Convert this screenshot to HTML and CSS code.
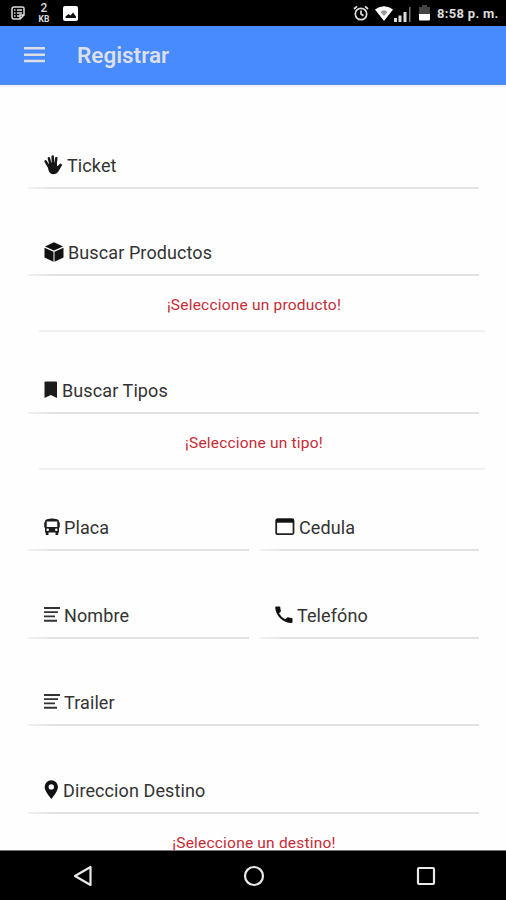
FILE: index.html
```html
<!DOCTYPE html>
<html lang="es">
<head>
<meta charset="utf-8">
<title>Registrar</title>
<link rel="stylesheet" href="styles.css">
</head>
<body>
<div class="statusbar">
  <svg class="st-list" width="14" height="14" viewBox="0 0 14 14" fill="none" stroke="#ddd" stroke-width="1.500"><path d="M3 1h8.500q1.500 0 1.500 1.500v6.500l-4 4H3q-2 0-2-2V3q0-2 2-2zM3 4h1.500M6 4h5M3 7h1.500M6 7h5M3 10h1.500M6 10h3M9 13V9h4"/></svg>
  <div class="speed"><span>2</span><small>KB</small></div>
  <svg width="15" height="15" viewBox="0 0 15 15"><rect width="15" height="15" rx="2" fill="#fff"/><path d="M2.500 12V10.500l3-2.500 2 1.500 2.500-3 3 4V12z" fill="#111"/></svg>
  <div class="status-right">
    <svg class="alarm" width="16" height="16" viewBox="0 0 16 16" fill="none" stroke="#ddd" stroke-width="1.700"><circle cx="8" cy="9" r="5.700"/><path d="M8 5.500V9l2.500 1.800M1 4l3-2.700M15 4l-3-2.700"/></svg>
    <svg class="wifi" width="18" height="15" viewBox="0 0 18 15"><path d="M0 3.500Q9-3 18 3.500L9 15z" fill="#fff"/><path d="M5.500 6q3.500-3.500 7 0L9 10z" fill="#999"/></svg>
    <svg class="signal" width="17" height="15" viewBox="0 0 17 15"><path d="M0 11h3v4H0zM4.500 8.500h3V15h-3zM9.500 5h3v10h-3z" fill="#ddd"/><path d="M15 0h1.500v15H15z" fill="#777"/></svg>
    <svg class="battery" width="11" height="16" viewBox="0 0 11 16"><path d="M3 0h5v2h3v7H0V2h3z" fill="#444"/><path d="M0 9h11v5.500q0 1-1 1H1q-1 0-1-1z" fill="#fff"/></svg>
    <span class="clock">8:58 p. m.</span>
  </div>
</div>
<header class="toolbar">
  <svg width="21" height="16" viewBox="0 0 21 16" fill="#dcdfe6"><path d="M0 0h21v2.500H0zM0 6.500h21V9H0zM0 12.800h21v2.500H0z"/></svg>
  <h1>Registrar</h1>
</header>
<main class="form">
  <div class="field"><svg width="19" height="20" viewBox="0 0 19 20" fill="none" stroke="#161616" stroke-width="2.500" stroke-linecap="round" stroke-linejoin="round"><path d="M5 12L1.600 6.300M6.700 10.500L4.900 3.300M9 10l-.3-8.500M11.300 10.500l1-7.300"/><path d="M4.800 10l1-1.500h6.200l.9 4.300 3.700-3.500.8.700-3.500 6q-1.500 2.500-5 2.500-3.200 0-4-4.500z" fill="#161616" stroke-width="1.400"/></svg><label>Ticket</label></div>
  <div class="field"><svg width="20" height="20" viewBox="0 0 20 20" fill="#111"><path d="M10 .3l9 4.200-9 4.100-9-4.100zM.5 5.700l9 4.100v9.900L.5 15.500zM19.500 5.700l-9 4.100v9.900l9-4.200z"/></svg><label>Buscar Productos</label></div>
  <p class="message">¡Seleccione un producto!</p>
  <div class="field short"><svg width="14" height="19" viewBox="0 0 14 19" fill="#1c1c1c"><path d="M.5 1.500q0-1 1-1h10.500q1 0 1 1v15.500l-6.200-3L.5 17z"/></svg><label>Buscar Tipos</label></div>
  <p class="message">¡Seleccione un tipo!</p>
  <div class="row short">
    <div class="field"><svg width="16" height="19" viewBox="0 0 16 19"><path fill="#1c1c1c" fill-rule="evenodd" d="M3 1.200Q8-.2 13 1.200q2 .5 2 2.300l.8 1.500v4l-.8 1v4.500h-.8V17h-2.700v-2.500h-7V17H1.800v-2.500H1V10L.2 9V5L1 3.500q0-1.800 2-2.300zM2.700 3.500V9h10.600V3.500zM3.700 10.500a1.300 1.300 0 100 2.600 1.300 1.300 0 000-2.600zm8.600 0a1.300 1.300 0 100 2.600 1.300 1.300 0 000-2.600z"/></svg><label>Placa</label></div>
    <div class="field right"><svg width="20" height="19" viewBox="0 0 20 19"><rect x="1.200" y="1.200" width="17.300" height="15" rx="1.500" fill="none" stroke="#222" stroke-width="1.800"/><path d="M1 1h18v3.700H1z" fill="#111"/></svg><label>Cedula</label></div>
  </div>
  <div class="row">
    <div class="field"><svg width="16" height="19" viewBox="0 0 16 19" fill="#333"><path d="M0 1h16v2H0zM0 5.300h14v1.800H0zM0 9.500h11v1.800H0zM0 13.700h13v2H0z"/></svg><label>Nombre</label></div>
    <div class="field right"><svg width="18" height="19" viewBox="0 0 18 19"><path fill="#111" d="M1 .5h3.500q.8 0 .8.800 0 2 .6 3.500.2.600-.2 1L4 7.300q2 4 6.300 6l1.800-1.800q.4-.4 1-.2 1.600.6 3.500.6.900 0 .9.900V16q0 1-.9 1C8 17 .5 9.500.2 1.500Q.2.500 1 .5z"/></svg><label>Telefóno</label></div>
  </div>
  <div class="field"><svg width="16" height="19" viewBox="0 0 16 19" fill="#333"><path d="M0 1h16v2H0zM0 5.300h14v1.800H0zM0 9.500h11v1.800H0zM0 13.700h13v2H0z"/></svg><label>Trailer</label></div>
  <div class="field"><svg width="15" height="20" viewBox="0 0 15 20"><path fill="#111" fill-rule="evenodd" d="M7.300.3A6.700 6.700 0 0114 7q0 4-6.700 12Q.6 11 .6 7A6.700 6.700 0 017.300.3zm0 3.900a2.700 2.700 0 100 5.400 2.700 2.700 0 000-5.400z"/></svg><label>Direccion Destino</label></div>
  <p class="message">¡Seleccione un destino!</p>
</main>
<nav class="navbar">
  <svg width="20" height="22" viewBox="0 0 20 22" fill="none" stroke="#e8e8e8" stroke-width="2.200" stroke-linejoin="round"><path d="M17.500 2v18L2 11z"/></svg>
  <svg width="22" height="22" viewBox="0 0 22 22" fill="none" stroke="#e8e8e8" stroke-width="2.200"><circle cx="11" cy="11" r="9"/></svg>
  <svg width="20" height="20" viewBox="0 0 20 20" fill="none" stroke="#e8e8e8" stroke-width="2.200"><rect x="2" y="2" width="16" height="16" rx="1"/></svg>
</nav>
</body>
</html>
```
FILE: styles.css
```css
* { box-sizing: border-box; }
body {
  margin: 0;
  width: 506px;
  height: 900px;
  overflow: hidden;
  display: flex;
  flex-direction: column;
  background: #fefefe;
  font-family: Roboto, "Liberation Sans", sans-serif;
}
svg { display: block; flex: none; }
.statusbar {
  flex: none;
  height: 26px;
  padding-left: 11px;
  display: flex;
  align-items: center;
  background: #000;
  color: #ddd;
}
.speed {
  width: 20px;
  margin: 1px 9px 0;
  text-align: center;
  font-size: 12px;
  line-height: 11px;
  font-weight: 500;
}
.speed span, .speed small { display: block; }
.speed small { font-size: 8.500px; line-height: 10px; font-weight: 700; }
.status-right { display: flex; align-items: center; margin-left: auto; padding-right: 8px; }
.wifi { margin-left: 6px; }
.signal { margin: 2px 0 0 1px; }
.battery { margin-left: 8px; }
.clock {
  width: 61px;
  margin-left: 7px;
  font-size: 13px;
  font-weight: 700;
  letter-spacing: .3px;
  white-space: nowrap;
}
.toolbar {
  flex: none;
  height: 59px;
  padding: 0 24px;
  display: flex;
  align-items: center;
  gap: 32px;
  background: #488aff;
  border-bottom: 1px solid #5a8ae6;
  color: #dcdfe6;
}
.toolbar h1 {
  margin: 0;
  font-size: 22.500px;
  line-height: 28px;
  font-weight: 600;
}
.form {
  flex: 1;
  min-height: 0;
  overflow: hidden;
  padding: 14px 27px 0 28px;
  border-top: 2px solid #f0f0fa;
}
.field {
  height: 87.500px;
  padding: 0 0 13px 16px;
  display: flex;
  align-items: flex-end;
  gap: 4px;
  background: linear-gradient(90deg, #f3f3f3, #e3e3e3 24px) bottom / 100% 2px no-repeat;
}
.right { padding-left: 15px; }
.field svg { margin-bottom: 1px; }
.field label {
  font-size: 18px;
  line-height: 20px;
  letter-spacing: .1px;
  color: #333;
  white-space: nowrap;
}
.row { display: grid; grid-template-columns: 221px 219px; gap: 11px; }
.short, .short .field { height: 81.500px; }
.message {
  margin: 0 -6px 0 11px;
  height: 56px;
  padding: 19px 16px 0 0;
  border-bottom: 2px solid #f1f1f1;
  text-align: center;
  color: #c72b36;
  font-size: 15.500px;
  line-height: 20px;
  letter-spacing: .2px;
}
.navbar {
  flex: none;
  height: 50px;
  display: flex;
  align-items: center;
  justify-content: space-between;
  padding: 0 70px 0 73px;
  background: #000;
  border-top: 1px solid #777;
}
.navbar svg:nth-child(2) { margin-right: 2px; }
```
